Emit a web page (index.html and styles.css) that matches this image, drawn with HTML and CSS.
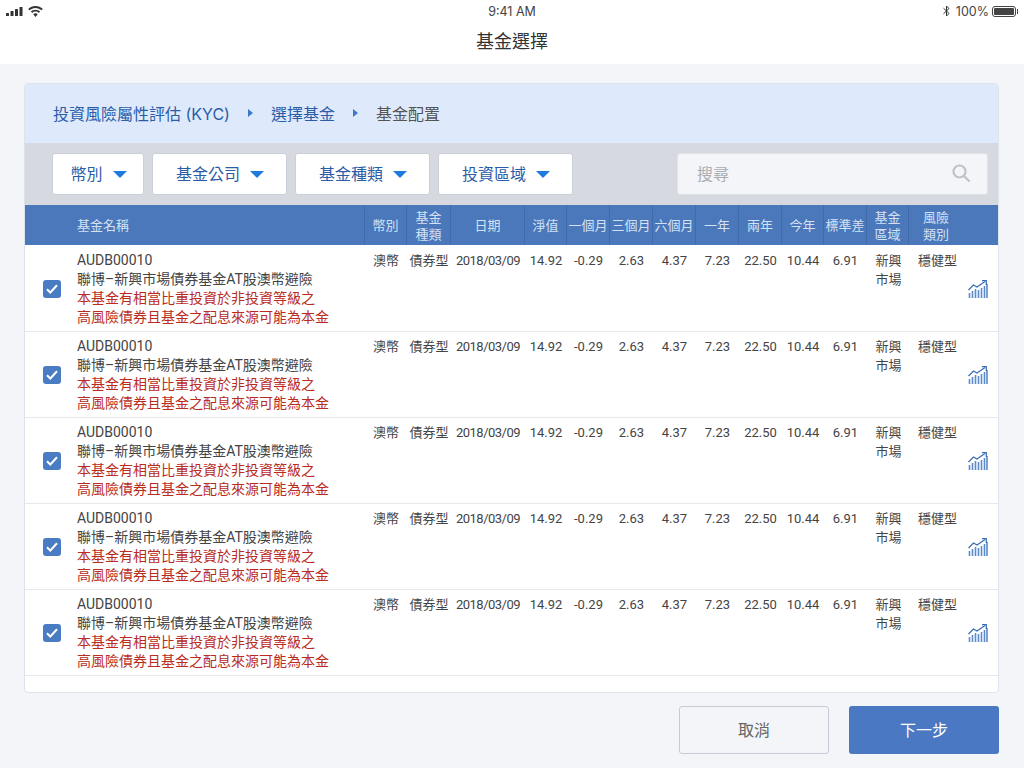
FILE: index.html
```html
<!DOCTYPE html>
<html lang="zh-Hant">
  <head>
    <meta charset="UTF-8" />
    <title>基金選擇</title>
    <link rel="stylesheet" href="styles.css">
  </head>
  <body>
    <header class="topbar">
      <div class="status">
        <div class="status-left">
          <svg width="17" height="9" viewBox="0 0 17 9"><rect x="0" y="6" width="3" height="3" rx=".5"/><rect x="4.5" y="4" width="3" height="5" rx=".5"/><rect x="9" y="2" width="3" height="7" rx=".5"/><rect x="13.5" y="0" width="3" height="9" rx=".5"/></svg>
          <svg width="15" height="11" viewBox="0 0 15 11"><path d="M7.5 0C4.6 0 2.1 1.1.2 2.9l1.3 1.4C3 2.8 5.2 1.9 7.5 1.9s4.5.9 6 2.4l1.3-1.4C12.9 1.1 10.4 0 7.5 0z"/><path d="M7.5 3.7c-1.8 0-3.4.7-4.6 1.8l1.3 1.4c.9-.8 2-1.3 3.3-1.3s2.4.5 3.300 1.300l1.300-1.400C10.900 4.400 9.300 3.700 7.500 3.700z"/><path d="M7.5 7.300c-.9 0-1.600.3-2.200.9L7.500 11l2.200-2.800c-.6-.6-1.300-.9-2.200-.9z"/></svg>
        </div>
        <div class="status-time">9:41 AM</div>
        <div class="status-right">
          <svg width="7" height="12" viewBox="0 0 7 12" fill="none" stroke="#333" stroke-width="1"><path d="M.5 3.2 6 8.500 3.500 11V1L6 3.500.5 8.800"/></svg>
          <span class="battery-text">100%</span>
          <span class="battery"><span class="battery-fill"></span></span>
        </div>
      </div>
      <h1 class="page-title">基金選擇</h1>
    </header>

    <main class="content">
      <section class="card">
        <nav class="crumbs">
          <a class="crumb">投資風險屬性評估 (KYC)</a>
          <i class="crumb-arrow"></i>
          <a class="crumb">選擇基金</a>
          <i class="crumb-arrow"></i>
          <span class="crumb current">基金配置</span>
        </nav>

        <div class="filters">
          <button class="filter filter-short">幣別<i class="caret"></i></button>
          <button class="filter">基金公司<i class="caret"></i></button>
          <button class="filter">基金種類<i class="caret"></i></button>
          <button class="filter">投資區域<i class="caret"></i></button>
          <div class="search">
            <span>搜尋</span>
            <svg width="18" height="18" viewBox="0 0 18 18" fill="none" stroke="#bfc3c9" stroke-width="2.2"><circle cx="7.5" cy="7.5" r="6"/><path d="M12 12l5 5" stroke-linecap="round"/></svg>
          </div>
        </div>

        <div class="thead row-grid">
          <div class="th no-line"></div>
          <div class="th th-name">基金名稱</div>
          <div class="th">幣別</div>
          <div class="th">基金<br>種類</div>
          <div class="th">日期</div>
          <div class="th">淨值</div>
          <div class="th">一個月</div>
          <div class="th">三個月</div>
          <div class="th">六個月</div>
          <div class="th">一年</div>
          <div class="th">兩年</div>
          <div class="th">今年</div>
          <div class="th">標準差</div>
          <div class="th">基金<br>區域</div>
          <div class="th no-line">風險<br>類別</div>
          <div class="th no-line"></div>
        </div>

        <div class="tr row-grid">
          <div class="td-check"><span class="check"><svg width="12" height="10" viewBox="0 0 12 10" fill="none" stroke="#fff" stroke-width="2"><path d="M1 5.2 4.3 8.500 11 1.200"/></svg></span></div>
          <div class="td-name">AUDB00010<br>聯博–新興市場債券基金AT股澳幣避險<br><span class="warn">本基金有相當比重投資於非投資等級之<br>高風險債券且基金之配息來源可能為本金</span></div>
          <div class="td">澳幣</div><div class="td">債券型</div><div class="td td-date">2018/03/09</div><div class="td">14.92</div><div class="td">-0.29</div><div class="td">2.63</div><div class="td">4.37</div><div class="td">7.23</div><div class="td">22.50</div><div class="td">10.44</div><div class="td">6.91</div><div class="td td-region">新興<br>市場</div><div class="td td-risk">穩健型</div>
          <div class="td-chart"><svg width="20" height="18" viewBox="0 0 20 18" fill="none"><path d="M1.500 18v-5M4.500 18v-7M7.500 18V9M10.500 18v-8M13.500 18V8M16.500 18V6M19 18V4" stroke="#5b8bcb" stroke-width="1.600"/><path d="M.5 10 5.500 5 9 7 17 1.500" stroke="#3f70b5" stroke-width="1.300"/><path d="M14 .7h4.300V5" stroke="#3f70b5" stroke-width="1.300"/></svg></div>
        </div>
        <div class="tr row-grid">
          <div class="td-check"><span class="check"><svg width="12" height="10" viewBox="0 0 12 10" fill="none" stroke="#fff" stroke-width="2"><path d="M1 5.2 4.3 8.500 11 1.200"/></svg></span></div>
          <div class="td-name">AUDB00010<br>聯博–新興市場債券基金AT股澳幣避險<br><span class="warn">本基金有相當比重投資於非投資等級之<br>高風險債券且基金之配息來源可能為本金</span></div>
          <div class="td">澳幣</div><div class="td">債券型</div><div class="td td-date">2018/03/09</div><div class="td">14.92</div><div class="td">-0.29</div><div class="td">2.63</div><div class="td">4.37</div><div class="td">7.23</div><div class="td">22.50</div><div class="td">10.44</div><div class="td">6.91</div><div class="td td-region">新興<br>市場</div><div class="td td-risk">穩健型</div>
          <div class="td-chart"><svg width="20" height="18" viewBox="0 0 20 18" fill="none"><path d="M1.500 18v-5M4.500 18v-7M7.500 18V9M10.500 18v-8M13.500 18V8M16.500 18V6M19 18V4" stroke="#5b8bcb" stroke-width="1.600"/><path d="M.5 10 5.500 5 9 7 17 1.500" stroke="#3f70b5" stroke-width="1.300"/><path d="M14 .7h4.300V5" stroke="#3f70b5" stroke-width="1.300"/></svg></div>
        </div>
        <div class="tr row-grid">
          <div class="td-check"><span class="check"><svg width="12" height="10" viewBox="0 0 12 10" fill="none" stroke="#fff" stroke-width="2"><path d="M1 5.2 4.3 8.500 11 1.200"/></svg></span></div>
          <div class="td-name">AUDB00010<br>聯博–新興市場債券基金AT股澳幣避險<br><span class="warn">本基金有相當比重投資於非投資等級之<br>高風險債券且基金之配息來源可能為本金</span></div>
          <div class="td">澳幣</div><div class="td">債券型</div><div class="td td-date">2018/03/09</div><div class="td">14.92</div><div class="td">-0.29</div><div class="td">2.63</div><div class="td">4.37</div><div class="td">7.23</div><div class="td">22.50</div><div class="td">10.44</div><div class="td">6.91</div><div class="td td-region">新興<br>市場</div><div class="td td-risk">穩健型</div>
          <div class="td-chart"><svg width="20" height="18" viewBox="0 0 20 18" fill="none"><path d="M1.500 18v-5M4.500 18v-7M7.500 18V9M10.500 18v-8M13.500 18V8M16.500 18V6M19 18V4" stroke="#5b8bcb" stroke-width="1.600"/><path d="M.5 10 5.500 5 9 7 17 1.500" stroke="#3f70b5" stroke-width="1.300"/><path d="M14 .7h4.300V5" stroke="#3f70b5" stroke-width="1.300"/></svg></div>
        </div>
        <div class="tr row-grid">
          <div class="td-check"><span class="check"><svg width="12" height="10" viewBox="0 0 12 10" fill="none" stroke="#fff" stroke-width="2"><path d="M1 5.2 4.3 8.500 11 1.200"/></svg></span></div>
          <div class="td-name">AUDB00010<br>聯博–新興市場債券基金AT股澳幣避險<br><span class="warn">本基金有相當比重投資於非投資等級之<br>高風險債券且基金之配息來源可能為本金</span></div>
          <div class="td">澳幣</div><div class="td">債券型</div><div class="td td-date">2018/03/09</div><div class="td">14.92</div><div class="td">-0.29</div><div class="td">2.63</div><div class="td">4.37</div><div class="td">7.23</div><div class="td">22.50</div><div class="td">10.44</div><div class="td">6.91</div><div class="td td-region">新興<br>市場</div><div class="td td-risk">穩健型</div>
          <div class="td-chart"><svg width="20" height="18" viewBox="0 0 20 18" fill="none"><path d="M1.500 18v-5M4.500 18v-7M7.500 18V9M10.500 18v-8M13.500 18V8M16.500 18V6M19 18V4" stroke="#5b8bcb" stroke-width="1.600"/><path d="M.5 10 5.500 5 9 7 17 1.500" stroke="#3f70b5" stroke-width="1.300"/><path d="M14 .7h4.300V5" stroke="#3f70b5" stroke-width="1.300"/></svg></div>
        </div>
        <div class="tr row-grid">
          <div class="td-check"><span class="check"><svg width="12" height="10" viewBox="0 0 12 10" fill="none" stroke="#fff" stroke-width="2"><path d="M1 5.2 4.3 8.500 11 1.200"/></svg></span></div>
          <div class="td-name">AUDB00010<br>聯博–新興市場債券基金AT股澳幣避險<br><span class="warn">本基金有相當比重投資於非投資等級之<br>高風險債券且基金之配息來源可能為本金</span></div>
          <div class="td">澳幣</div><div class="td">債券型</div><div class="td td-date">2018/03/09</div><div class="td">14.92</div><div class="td">-0.29</div><div class="td">2.63</div><div class="td">4.37</div><div class="td">7.23</div><div class="td">22.50</div><div class="td">10.44</div><div class="td">6.91</div><div class="td td-region">新興<br>市場</div><div class="td td-risk">穩健型</div>
          <div class="td-chart"><svg width="20" height="18" viewBox="0 0 20 18" fill="none"><path d="M1.500 18v-5M4.500 18v-7M7.500 18V9M10.500 18v-8M13.500 18V8M16.500 18V6M19 18V4" stroke="#5b8bcb" stroke-width="1.600"/><path d="M.5 10 5.500 5 9 7 17 1.500" stroke="#3f70b5" stroke-width="1.300"/><path d="M14 .7h4.300V5" stroke="#3f70b5" stroke-width="1.300"/></svg></div>
        </div>
      </section>

      <div class="actions">
        <button class="btn btn-cancel">取消</button>
        <button class="btn btn-next">下一步</button>
      </div>
    </main>
  </body>
</html>
```

FILE: styles.css
```css
* {
  box-sizing: border-box;
}
html,
body {
  height: 768px;
}
body {
  margin: 0;
  overflow: hidden;
  background: #f3f5f8;
  color: #444;
  font-family: Roboto, "Noto Sans CJK TC", sans-serif;
  font-size: 14px;
}
.topbar {
  height: 64px;
  background: #fff;
}
.status {
  display: flex;
  justify-content: space-between;
  align-items: center;
  height: 22px;
  padding: 0 6px;
  color: #444;
  font-size: 12.5px;
  font-family: Inter, "Noto Sans CJK TC", sans-serif;
}
.status-left,
.status-right {
  display: flex;
  align-items: center;
  width: 200px;
}
.status-left {
  gap: 5px;
  fill: #333;
}
.status-right {
  justify-content: flex-end;
  gap: 6px;
}
.battery-text {
  margin-right: -3px;
}
.battery {
  display: block;
  position: relative;
  width: 24px;
  height: 11px;
  padding: 1px;
  border: 1px solid #444;
  border-radius: 3px;
  margin-right: 2px;
}
.battery::after {
  content: "";
  position: absolute;
  right: -3px;
  top: 2px;
  width: 1px;
  height: 5px;
  background: #444;
}
.battery-fill {
  display: block;
  height: 100%;
  background: #444;
  border-radius: 1px;
}
.page-title {
  margin: 0;
  height: 42px;
  line-height: 40px;
  text-align: center;
  font-size: 18px;
  font-weight: 400;
  color: #333;
}
.content {
  padding: 19px 25px 0 24px;
}
.card {
  height: 610px;
  background: #fff;
  border: 1px solid #dde3ea;
  border-radius: 4px;
  overflow: hidden;
}
.crumbs {
  display: flex;
  align-items: center;
  height: 59px;
  padding: 0 0 2px 28px;
  background: #deeafc;
  font-family: Inter, "Noto Sans CJK TC", sans-serif;
  font-size: 16px;
  color: #2a5ca8;
}
.crumb.current {
  color: #555;
}
.crumb-arrow {
  width: 0;
  height: 0;
  margin: 0 18px;
  border-left: 5px solid #3b78c8;
  border-top: 4px solid transparent;
  border-bottom: 4px solid transparent;
}
.filters {
  display: flex;
  gap: 8px;
  height: 62px;
  padding: 10px 10px 0 27px;
  background: #d6d9df;
}
.filter {
  display: flex;
  align-items: center;
  justify-content: center;
  width: 135px;
  height: 42px;
  padding: 0 0 2px 1px;
  background: #fff;
  border: 1px solid #c9d0da;
  border-radius: 3px;
  font: inherit;
  font-size: 16px;
  color: #2a5ca8;
}
.filter-short {
  width: 92px;
}
.caret {
  width: 0;
  height: 0;
  margin: 2px 0 0 10px;
  border-top: 7px solid #1f7ae0;
  border-left: 7px solid transparent;
  border-right: 7px solid transparent;
}
.search {
  display: flex;
  align-items: center;
  justify-content: space-between;
  width: 311px;
  height: 42px;
  margin-left: auto;
  padding: 0 17px 2px 19px;
  background: #f3f5f8;
  border: 1px solid #dfe2e7;
  border-radius: 3px;
  font-size: 16px;
  color: #a9adb3;
}
.row-grid {
  display: grid;
  grid-template-columns: 52px 288px 42px 44px 74px 42px 43px 43px 43px 43px 43px 42px 43px 42px 54px 1fr;
}
.thead {
  height: 40px;
  background: #4a78bb;
  color: #d4e1f3;
  font-size: 13px;
  line-height: 17px;
}
.th {
  display: flex;
  align-items: center;
  justify-content: center;
  padding-top: 1px;
  text-align: center;
  border-right: 1px solid #3f6ca9;
}
.th-name {
  justify-content: flex-start;
}
.no-line {
  border-right: 0;
}
.tr {
  height: 86px;
  border-bottom: 1px solid #e6e8ec;
}
.thead + .tr {
  margin-top: 1px;
}
.td {
  padding-top: 5px;
  text-align: center;
  font-size: 13px;
  line-height: 19px;
  white-space: nowrap;
}
.td-date {
  letter-spacing: -0.5px;
}
.td-region {
  padding-left: 1px;
}
.td-risk {
  padding-left: 3px;
}
.td-check,
.td-chart {
  display: flex;
  align-items: center;
}
.td-check {
  justify-content: flex-end;
  padding-right: 16px;
}
.check {
  display: flex;
  align-items: center;
  justify-content: center;
  width: 18px;
  height: 18px;
  background: #4a7cc4;
  border-radius: 3px;
}
.td-name {
  padding-top: 5px;
  line-height: 19px;
  white-space: nowrap;
}
.warn {
  color: #b92c1e;
}
.td-chart {
  justify-content: flex-end;
  padding-right: 10px;
}
.actions {
  display: flex;
  justify-content: flex-end;
  gap: 20px;
  margin-top: 13px;
}
.btn {
  width: 150px;
  height: 48px;
  padding: 0 0 2px;
  border-radius: 3px;
  font: inherit;
  font-size: 16px;
}
.btn-cancel {
  background: #f3f5f8;
  border: 1px solid #c3ccd8;
  color: #666;
}
.btn-next {
  background: #4a78c2;
  border: 0;
  color: #fff;
}
```
